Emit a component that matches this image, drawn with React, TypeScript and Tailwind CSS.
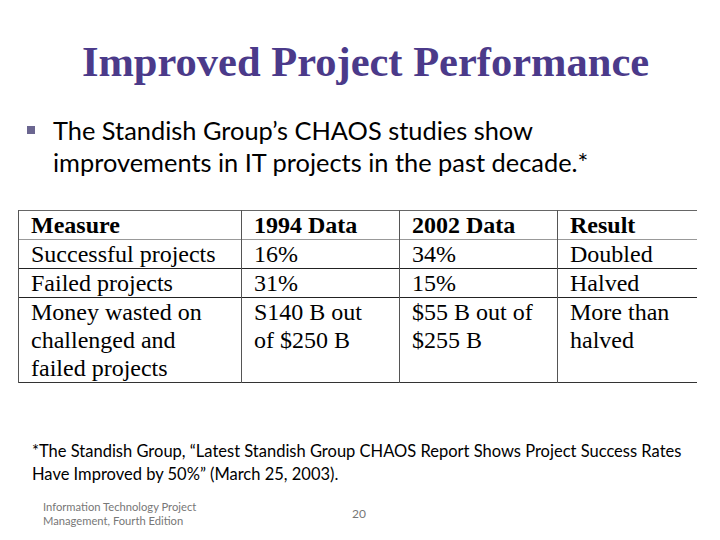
const rows = [
  ["Successful projects", "16%", "34%", "Doubled"],
  ["Failed projects", "31%", "15%", "Halved"],
  ["Money wasted on challenged and failed projects", "S140 B out of $250 B", "$55 B out of $255 B", "More than halved"],
]

export default function App() {
  return (
    <div className="w-[720px] h-[540px] bg-white overflow-hidden relative">
      <h1 className="pt-[38px] text-center text-[42.5px] leading-[48px] font-bold text-[#4b3a8a] font-['Liberation_Serif',serif] pl-[11px]">
        Improved Project Performance
      </h1>

      <div className="mt-[28px] flex pl-[27px] font-['Lato',sans-serif] text-[25.4px] leading-[32px] text-black">
        <span className="mt-[12px] w-[8px] h-[8px] bg-[#6b6690] shrink-0" />
        <p className="ml-[18px] w-[590px]">
          The Standish Group’s CHAOS studies show improvements in IT projects in the past decade.*
        </p>
      </div>

      <table className="mt-[32px] ml-[18px] w-[678px] border-collapse table-fixed font-['Liberation_Serif',serif] text-[24px] leading-[28px] text-black">
        <colgroup>
          <col className="w-[223px]" />
          <col className="w-[158px]" />
          <col className="w-[158px]" />
          <col className="w-[139px]" />
        </colgroup>
        <thead>
          <tr className="border-t border-[#666] border-b border-b-[#999]">
            {["Measure", "1994 Data", "2002 Data", "Result"].map((h) => (
              <th key={h} className="px-[12px] text-left font-bold border-l border-[#555]">
                {h}
              </th>
            ))}
          </tr>
        </thead>
        <tbody>
          {rows.map((r, ri) => (
            <tr key={ri} className={ri === 2 ? "border-b border-[#333] align-top" : "border-b border-[#222] align-top"}>
              {r.map((c, ci) => (
                <td key={ci} className={`px-[12px] border-l border-[#555] ${ri === 2 ? "h-[85px]" : ""}`}>
                  {c}
                </td>
              ))}
            </tr>
          ))}
        </tbody>
      </table>

      <p className="mt-[57px] pl-[32px] w-[700px] font-['Lato',sans-serif] text-[16.5px] leading-[23px] text-black">
        *The Standish Group, “Latest Standish Group CHAOS Report Shows Project Success Rates Have Improved by 50%” (March 25, 2003).
      </p>

      <div className="mt-[14px] flex items-center pl-[43px] font-['Lato',sans-serif] text-[#777]">
        <div className="w-[180px] text-[11.2px] leading-[14px]">
          <div>Information Technology Project</div>
          <div>Management, Fourth Edition</div>
        </div>
        <div className="ml-[129px] text-[12px]">20</div>
      </div>
    </div>
  )
}
